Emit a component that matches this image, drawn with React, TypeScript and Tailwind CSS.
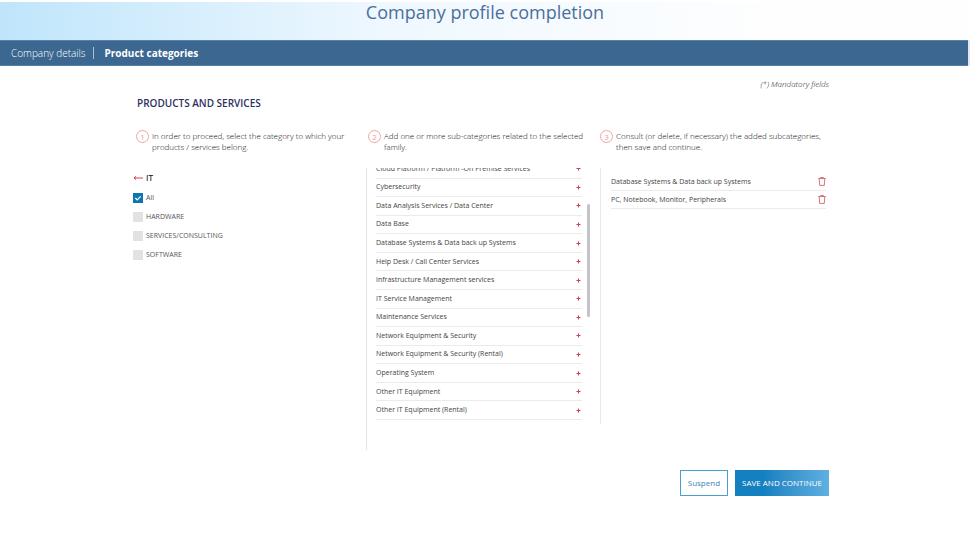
import React, { useState } from "react";

const families = ["All", "HARDWARE", "SERVICES/CONSULTING", "SOFTWARE"];

const subcategories = [
  "Cloud Platform / Platform -On Premise Services",
  "Cybersecurity",
  "Data Analysis Services / Data Center",
  "Data Base",
  "Database Systems & Data back up Systems",
  "Help Desk / Call Center Services",
  "Infrastructure Management services",
  "IT Service Management",
  "Maintenance Services",
  "Network Equipment & Security",
  "Network Equipment & Security (Rental)",
  "Operating System",
  "Other IT Equipment",
  "Other IT Equipment (Rental)",
];

function Step({ number, children }: { number: number; children: React.ReactNode }) {
  return (
    <div className="flex h-[38px] items-start gap-[3px]">
      <span className="flex size-[13px] shrink-0 items-center justify-center rounded-full border border-[#f5a3a3] text-[8px] leading-none text-[#f09a9a]">
        {number}
      </span>
      <p className="text-[8px] leading-[11px] font-light text-[#111]">{children}</p>
    </div>
  );
}

function TrashIcon() {
  return (
    <svg viewBox="0 0 8 9" className="h-[9px] w-2" fill="none" stroke="#d9646b" strokeWidth="0.9">
      <path d="M0.3 1.5H7.7M2.6 1.4V0.5H5.4V1.4M1.2 1.6L1.7 8.4H6.3L6.8 1.6" />
    </svg>
  );
}

export default function App() {
  const [checked, setChecked] = useState<string[]>(["All"]);
  const [added, setAdded] = useState<string[]>([
    "Database Systems & Data back up Systems",
    "PC, Notebook, Monitor, Peripherals",
  ]);

  const toggleFamily = (name: string) => {
    setChecked((prev) =>
      prev.includes(name) ? prev.filter((n) => n !== name) : [...prev, name]
    );
  };

  const addSubcategory = (name: string) => {
    setAdded((prev) => (prev.includes(name) ? prev : [...prev, name]));
  };

  return (
    <div className="min-h-screen bg-white pt-0.5 font-['Open_Sans','Liberation_Sans',sans-serif] text-[#444]">
      <header className="flex h-[38px] justify-center bg-linear-to-r from-[#bfe5fb] via-[#eff8ff] via-40% to-[#fefefe] to-80%">
        <h1 className="text-[18px] leading-5 text-[#4a6f9c]">Company profile completion</h1>
      </header>

      <div className="bg-[#e4e8f2] pr-0.5">
        <nav className="flex h-[26px] items-center border-y border-[#5580a8] bg-[#3b6790] pl-[11px] text-[10px] text-white">
          <a href="#details" className="border-r border-[#a9c0d6] pr-[7px] leading-3 font-light">
            Company details
          </a>
          <a href="#categories" className="pl-[11px] leading-3 font-bold">
            Product categories
          </a>
        </nav>
      </div>

      <main className="mr-0.5">
        <div className="mx-auto max-w-[696px]">
          <p className="pt-3 pr-[3px] text-right text-[8px] leading-3 font-light text-[#222] italic">
            (*) Mandatory fields
          </p>
          <h2 className="mt-1.5 pl-px text-[10px] leading-[14px] font-semibold text-[#2b3163]">
            PRODUCTS AND SERVICES
          </h2>

          <div className="mt-5 grid grid-cols-3">
            <section>
              <Step number={1}>
                In order to proceed, select the category to which your products / services belong.
              </Step>
              <div className="-ml-[3px] pt-[3px]">
                <button className="flex h-[14px] items-center gap-[3px] text-[8px] font-semibold text-[#333]">
                  <svg viewBox="0 0 10 6" className="h-1.5 w-2.5" fill="none" stroke="#d9434b" strokeWidth="1">
                    <path d="M10 3H1M3 1.4L1 3L3 4.6" />
                  </svg>
                  IT
                </button>
                <ul className="mt-1 grid h-[75px] auto-rows-fr">
                  {families.map((name) => (
                    <li key={name} className="flex items-center">
                      <label className="flex items-center gap-[3px] text-[7px] leading-[10px] text-[#555]">
                        <input
                          type="checkbox"
                          checked={checked.includes(name)}
                          onChange={() => toggleFamily(name)}
                          className="peer sr-only"
                        />
                        <span className="flex size-2.5 items-center justify-center bg-[#e2e2e2] text-transparent peer-checked:bg-[#0b77ae] peer-checked:text-white">
                          <svg viewBox="0 0 8 8" className="size-2" fill="none" stroke="currentColor" strokeWidth="1.2">
                            <path d="M1.3 4L3.2 5.8L6.7 2.3" />
                          </svg>
                        </span>
                        {name}
                      </label>
                    </li>
                  ))}
                </ul>
              </div>
            </section>

            <section>
              <Step number={2}>
                Add one or more sub-categories related to the selected family.
              </Step>
              <div className="-ml-0.5 flex h-[282px] items-start border-l border-[#e3e3e3] pl-[9px]">
                <div className="flex h-[252px] w-[206px] flex-col justify-end overflow-hidden">
                  <ul className="grid h-[260px] shrink-0 auto-rows-fr">
                    {subcategories.map((name) => (
                      <li
                        key={name}
                        className="flex items-center justify-between border-b border-[#ebebeb] pr-px text-[7px] leading-[10px]"
                      >
                        {name}
                        <button
                          aria-label={`Add ${name}`}
                          onClick={() => addSubcategory(name)}
                          className="flex"
                        >
                          <svg viewBox="0 0 5 5" className="size-[5px]" stroke="#d0404f" strokeWidth="1">
                            <path d="M2.5 0.5V4.5M0.5 2.5H4.5" />
                          </svg>
                        </button>
                      </li>
                    ))}
                  </ul>
                </div>
                <div className="mt-9 ml-[5px] h-[113px] w-[3px] rounded-full bg-[#c3c3c8]" />
              </div>
            </section>

            <section>
              <Step number={3}>
                Consult (or delete, if necessary) the added subcategories, then save and continue.
              </Step>
              <div className="h-64 border-l border-[#e8e8e8] pt-[5px] pr-1.5 pl-2.5">
                <ul>
                  {added.map((name) => (
                    <li
                      key={name}
                      className="flex h-[18px] items-center justify-between border-b border-[#ebebeb] text-[7px] leading-[10px]"
                    >
                      {name}
                      <button
                        aria-label={`Delete ${name}`}
                        onClick={() => setAdded((prev) => prev.filter((n) => n !== name))}
                      >
                        <TrashIcon />
                      </button>
                    </li>
                  ))}
                </ul>
              </div>
            </section>
          </div>

          <div className="mt-5 flex justify-end gap-[7px] pr-[3px]">
            <button className="h-[26px] border border-[#4a9fcb] px-[7px] text-[8px] text-[#3a87b8]">
              Suspend
            </button>
            <button className="h-[26px] bg-linear-to-r from-[#1480c0] from-30% to-[#5fb0e0] px-[7px] text-[8px] text-white">
              SAVE AND CONTINUE
            </button>
          </div>
        </div>
      </main>
    </div>
  );
}
